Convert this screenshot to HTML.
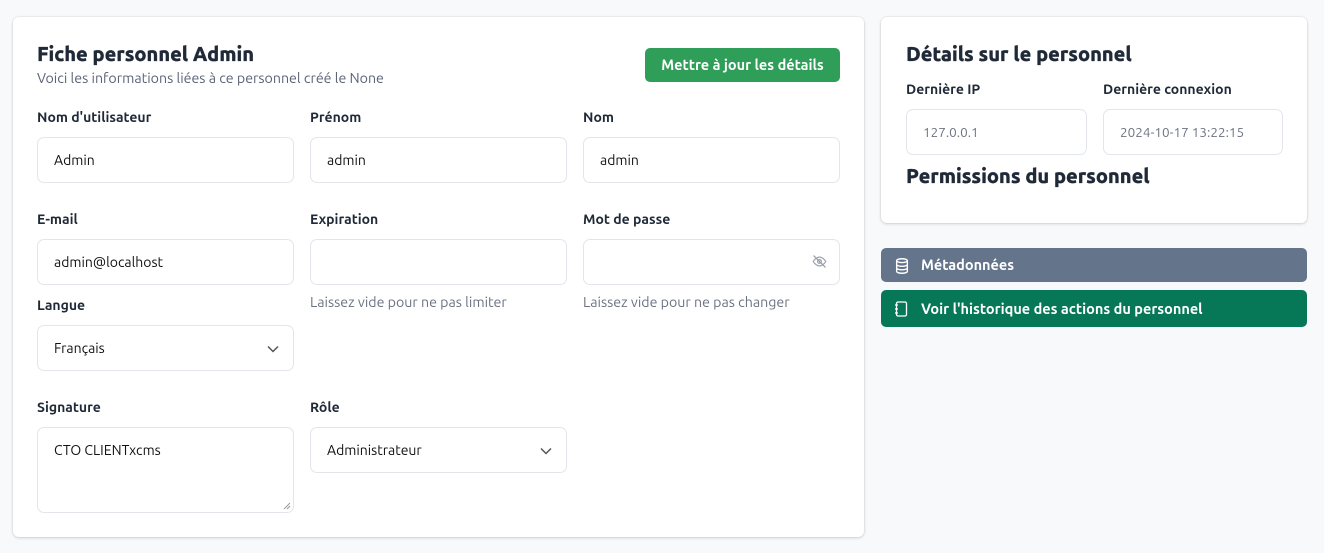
<!DOCTYPE html>
<html><head><meta charset="utf-8"><style>
*{box-sizing:border-box;margin:0;padding:0}
body{width:1324px;height:553px;background:#f8f9fb;font-family:"Ubuntu","Liberation Sans","DejaVu Sans",sans-serif;color:#1f2937;position:relative;overflow:hidden}
.card{position:absolute;background:#fff;border-radius:6px;box-shadow:0 1px 3px rgba(0,0,0,.15),0 0 0 1px rgba(0,0,0,.03)}
.a{position:absolute}
h1{position:absolute;font-size:20px;font-weight:800;color:#1f2937;white-space:nowrap;-webkit-text-stroke:0.3px #1f2937}
.sub{font-size:14.2px;color:#5b6475;white-space:nowrap}
.lbl{font-size:14px;font-weight:bold;color:#1f2937;white-space:nowrap}
.inp{position:absolute;width:257px;height:46px;border:1px solid #e2e5ea;border-radius:7px;background:#fff;font-size:14px;padding:0 16px;line-height:44px;color:#111}
.help{font-size:14.2px;color:#6b7280;white-space:nowrap}
.btn{position:absolute;border-radius:5px;color:#fff;font-size:14.5px;font-weight:bold;white-space:nowrap}
.chev{position:absolute;right:14px;top:18px}
</style></head><body>
<div class="card" style="left:13px;top:17px;width:851px;height:520px"></div>
<h1 style="left:37px;top:42px">Fiche personnel Admin</h1>
<div class="a sub" style="left:37px;top:70px">Voici les informations liées à ce personnel créé le None</div>
<div class="btn" style="left:645px;top:48px;width:195px;height:34px;background:#2f9e58;line-height:34px;text-align:center">Mettre à jour les détails</div>

<div class="a lbl" style="left:37px;top:109px">Nom d'utilisateur</div>
<div class="a lbl" style="left:310px;top:109px">Prénom</div>
<div class="a lbl" style="left:583px;top:109px">Nom</div>
<div class="inp" style="left:37px;top:137px">Admin</div>
<div class="inp" style="left:310px;top:137px">admin</div>
<div class="inp" style="left:583px;top:137px">admin</div>

<div class="a lbl" style="left:37px;top:211px">E-mail</div>
<div class="a lbl" style="left:310px;top:211px">Expiration</div>
<div class="a lbl" style="left:583px;top:211px">Mot de passe</div>
<div class="inp" style="left:37px;top:239px">admin@localhost</div>
<div class="inp" style="left:310px;top:239px"></div>
<div class="inp" style="left:583px;top:239px"><svg style="position:absolute;right:12px;top:14px" width="15" height="15" viewBox="0 0 24 24" fill="none" stroke="#9ca3af" stroke-width="2" stroke-linecap="round"><path d="M2 12s4-7 10-7 10 7 10 7-4 7-10 7S2 12 2 12z"/><circle cx="12" cy="12" r="3"/><path d="M3 3l18 18"/></svg></div>
<div class="a help" style="left:310px;top:294px">Laissez vide pour ne pas limiter</div>
<div class="a help" style="left:583px;top:294px">Laissez vide pour ne pas changer</div>

<div class="a lbl" style="left:37px;top:297px">Langue</div>
<div class="inp" style="left:37px;top:325px">Français<svg class="chev" width="12" height="10" viewBox="0 0 12 8" fill="none" stroke="#555" stroke-width="1.5"><path d="M1 1.5l5 5 5-5"/></svg></div>

<div class="a lbl" style="left:37px;top:399px">Signature</div>
<div class="a lbl" style="left:310px;top:399px">Rôle</div>
<div class="inp" style="left:37px;top:427px;height:86px;line-height:44px">CTO CLIENTxcms<svg style="position:absolute;right:2px;bottom:2px" width="9" height="9" viewBox="0 0 9 9" stroke="#999"><path d="M8 2L2 8M8 5L5 8"/></svg></div>
<div class="inp" style="left:310px;top:427px">Administrateur<svg class="chev" width="12" height="10" viewBox="0 0 12 8" fill="none" stroke="#555" stroke-width="1.5"><path d="M1 1.5l5 5 5-5"/></svg></div>

<div class="card" style="left:881px;top:17px;width:426px;height:206px"></div>
<h1 style="left:906px;top:42px">Détails sur le personnel</h1>
<div class="a lbl" style="left:906px;top:81px">Dernière IP</div>
<div class="a lbl" style="left:1103px;top:81px">Dernière connexion</div>
<div class="inp" style="left:906px;top:109px;width:181px;color:#6b7280;font-size:13.5px">127.0.0.1</div>
<div class="inp" style="left:1103px;top:109px;width:180px;color:#6b7280;font-size:13.5px">2024-10-17 13:22:15</div>
<h1 style="left:906px;top:164px">Permissions du personnel</h1>

<div class="btn" style="left:881px;top:248px;width:426px;height:34px;background:#64748b;line-height:34px;padding-left:40px">Métadonnées
<svg style="position:absolute;left:14px;top:10px" width="14" height="16" viewBox="0 0 13 15" fill="none" stroke="#fff" stroke-width="1.3"><ellipse cx="6.5" cy="2.5" rx="5" ry="1.8"/><path d="M1.5 2.5v10c0 1 2.2 1.8 5 1.8s5-.8 5-1.8v-10M1.5 6c0 1 2.2 1.8 5 1.8s5-.8 5-1.8M1.5 9.3c0 1 2.2 1.8 5 1.8s5-.8 5-1.8"/></svg></div>
<div class="btn" style="left:881px;top:290px;width:426px;height:37px;background:#067857;line-height:37px;padding-left:40px">Voir l'historique des actions du personnel
<svg style="position:absolute;left:13px;top:11px" width="14" height="16" viewBox="0 0 14 16" fill="none" stroke="#fff" stroke-width="1.3"><rect x="2.5" y="1" width="10" height="14" rx="1.5"/><path d="M1 4h3M1 8h3M1 12h3"/></svg></div>
</body></html>
